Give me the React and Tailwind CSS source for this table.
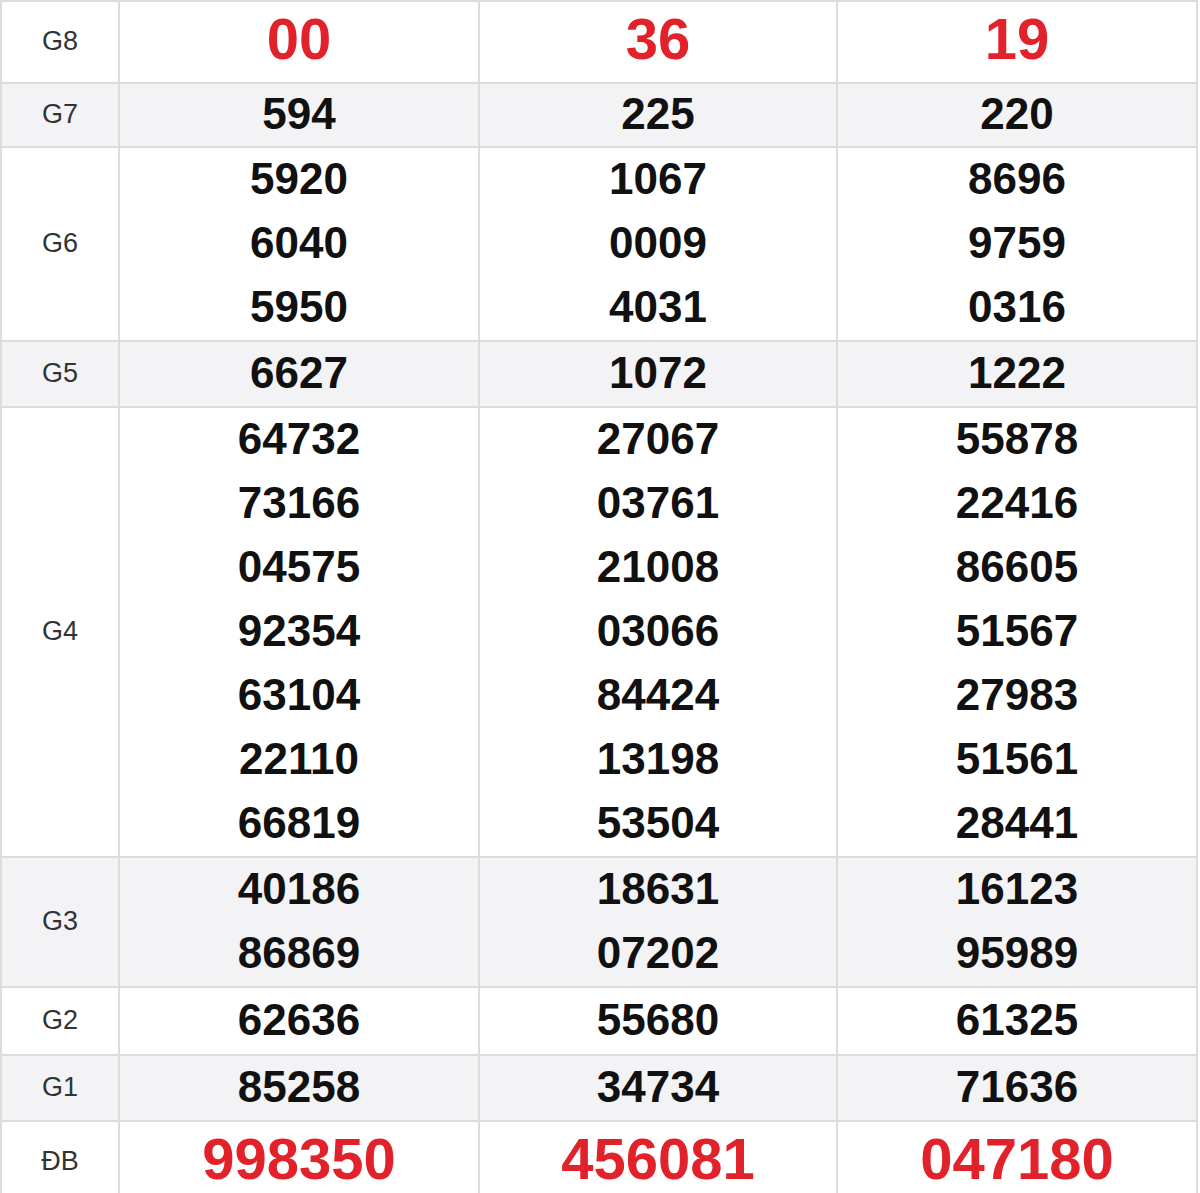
import React from "react";

const rows = [
  { label: "G8", lh: "leading-[74px] pb-[6px]", big: true, gray: false, data: [["00"], ["36"], ["19"]] },
  { label: "G7", lh: "leading-[60px] pb-[2px]", gray: true, data: [["594"], ["225"], ["220"]] },
  { label: "G6", lh: "leading-[62px] pb-[2px]", gray: false, data: [["5920", "6040", "5950"], ["1067", "0009", "4031"], ["8696", "9759", "0316"]] },
  { label: "G5", lh: "leading-[62px] pb-[2px]", gray: true, data: [["6627"], ["1072"], ["1222"]] },
  {
    label: "G4",
    lh: "leading-[62px] pb-[2px]",
    gray: false,
    data: [
      ["64732", "73166", "04575", "92354", "63104", "22110", "66819"],
      ["27067", "03761", "21008", "03066", "84424", "13198", "53504"],
      ["55878", "22416", "86605", "51567", "27983", "51561", "28441"],
    ],
  },
  { label: "G3", lh: "leading-[62px] pb-[2px]", gray: true, data: [["40186", "86869"], ["18631", "07202"], ["16123", "95989"]] },
  { label: "G2", lh: "leading-[64px] pb-[2px]", gray: false, data: [["62636"], ["55680"], ["61325"]] },
  { label: "G1", lh: "leading-[62px] pb-[2px]", gray: true, data: [["85258"], ["34734"], ["71636"]] },
  { label: "ĐB", lh: "leading-[74px] pb-[6px]", big: true, gray: false, data: [["998350"], ["456081"], ["047180"]] },
];

const widths = ["w-[360px]", "w-[358px]", "w-[360px]"];

function Row({ row }) {
  const bg = row.gray ? "bg-[#f3f2f4]" : "bg-white";
  const numCls = row.big
    ? "text-[58px] font-bold text-[#e2222b]"
    : "text-[44px] font-bold text-[#111]";
  return (
    <div className={`flex ${bg} border-b-2 border-[#dcdcdc]`}>
      <div className="w-[118px] shrink-0 flex items-center justify-center border-r-2 border-[#dcdcdc] text-[27px] text-[#333] pb-[2px]">
        {row.label}
      </div>
      {row.data.map((col, i) => (
        <div
          key={i}
          className={`${widths[i]} shrink-0 flex flex-col items-center border-r-2 border-[#dcdcdc]`}
        >
          {col.map((n, j) => (
            <div key={j} className={`${row.lh} ${numCls}`}>
              {n}
            </div>
          ))}
        </div>
      ))}
    </div>
  );
}

export default function App() {
  return (
    <div className="w-[1200px] h-[1193px] overflow-hidden bg-white" style={{ fontFamily: '"Liberation Sans", Arial, sans-serif' }}>
      <div className="w-[1198px] border-t-2 border-l-2 border-[#dcdcdc]">
        {rows.map((r) => (
          <Row key={r.label} row={r} />
        ))}
      </div>
    </div>
  );
}
